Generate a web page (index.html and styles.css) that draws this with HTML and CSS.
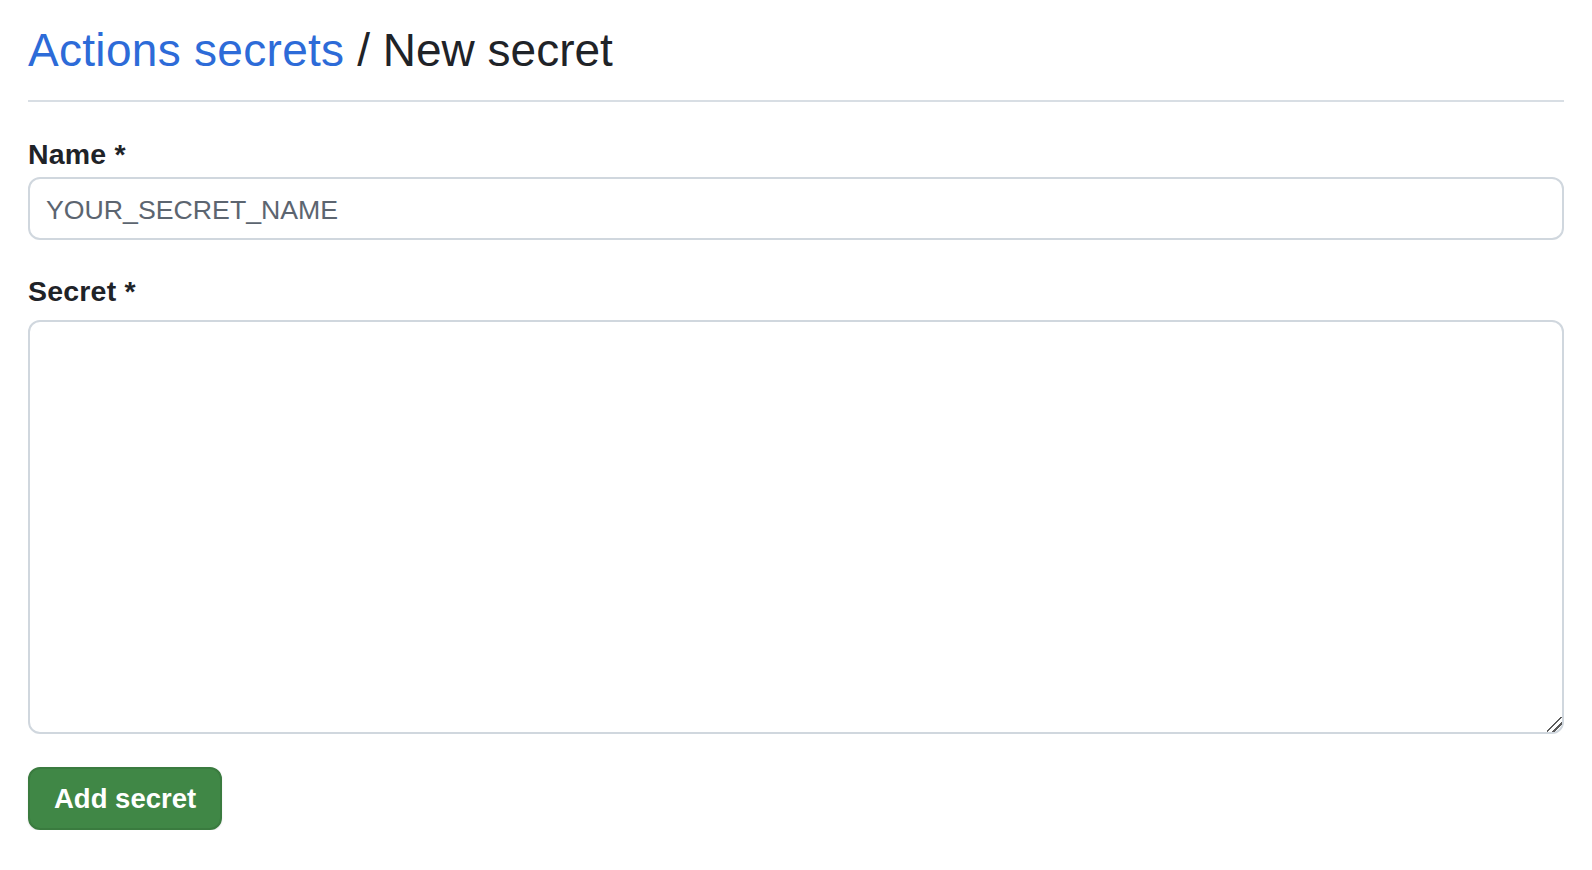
FILE: index.html
```html
<!DOCTYPE html>
<html lang="en">
<head>
<meta charset="utf-8">
<title>New secret</title>
<link rel="stylesheet" href="styles.css">
</head>
<body>
<main class="page">
  <h1 class="subhead"><a class="crumb" href="#">Actions secrets</a> / New secret</h1>
  <form class="form">
    <label class="label label-name" for="name">Name *</label>
    <input class="input" id="name" type="text" placeholder="YOUR_SECRET_NAME">
    <label class="label label-secret" for="secret">Secret *</label>
    <textarea class="textarea" id="secret"></textarea>
    <div class="actions">
      <button class="btn-primary" type="button">Add secret</button>
    </div>
  </form>
</main>
</body>
</html>
```

FILE: styles.css
```css
* { box-sizing: border-box; }

html, body {
  margin: 0;
  padding: 0;
  background: #ffffff;
}

body {
  font-family: "Liberation Sans", Arial, sans-serif;
  color: #1f2328;
}

.page {
  padding: 0 28px;
}

.subhead {
  margin: 0;
  padding: 22px 0 22px;
  font-size: 46px;
  line-height: 56px;
  font-weight: 400;
  color: #1f2328;
  border-bottom: 2px solid #d8dee4;
}

.crumb {
  color: #2d6bd8;
  text-decoration: none;
  letter-spacing: 0.3px;
}

.form {
  display: flex;
  flex-direction: column;
  align-items: stretch;
}

.label {
  display: block;
  font-size: 28.5px;
  line-height: 36px;
  font-weight: 700;
  letter-spacing: 0.2px;
  color: #1f2328;
}

.label-name {
  margin-top: 34px;
  margin-bottom: 5px;
}

.label-secret {
  margin-top: 33px;
  margin-bottom: 11px;
}

.input,
.textarea {
  display: block;
  width: 100%;
  margin: 0;
  font-family: "Liberation Sans", Arial, sans-serif;
  font-size: 26.7px;
  color: #1f2328;
  background: #ffffff;
  border: 2px solid #d0d7de;
  border-radius: 12px;
  outline: none;
}

.input {
  height: 63px;
  padding: 3px 16px 0;
}

.input::placeholder {
  color: #5c6570;
  opacity: 1;
}

.textarea {
  height: 414px;
  padding: 14px 16px;
  resize: vertical;
}

.textarea::-webkit-resizer {
  background:
    linear-gradient(135deg,
      transparent 0 44%,
      #5a5a5a 44% 52%,
      transparent 52% 66%,
      #5a5a5a 66% 74%,
      transparent 74%);
}

.actions {
  margin-top: 33px;
  display: flex;
}

.btn-primary {
  height: 63px;
  padding: 0 24px;
  font-family: "Liberation Sans", Arial, sans-serif;
  font-size: 27.5px;
  font-weight: 700;
  color: #ffffff;
  background: #408746;
  border: 2px solid #3a7b3f;
  border-radius: 12px;
  box-shadow: 0 1px 2px rgba(31, 35, 40, 0.12);
  cursor: pointer;
}
```
